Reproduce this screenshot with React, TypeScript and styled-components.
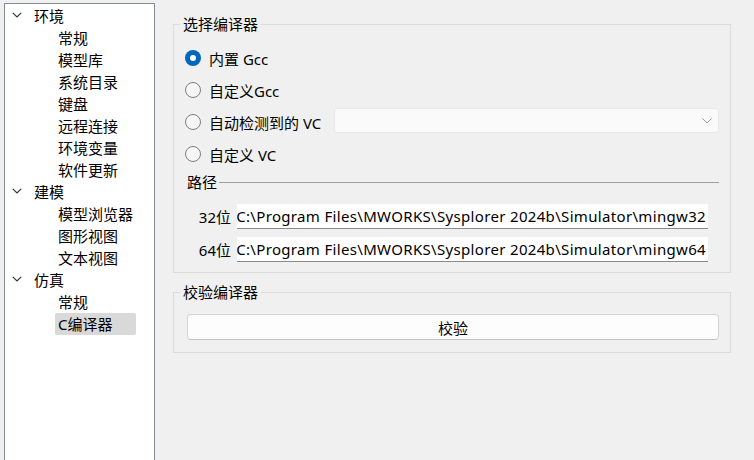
import React from 'react';
import styled, { createGlobalStyle } from 'styled-components';

const Global = createGlobalStyle`
  html, body { margin: 0; padding: 0; background: #f0f0f0; }
  body {
    font-family: "Segoe UI", "Noto Sans", "Noto Sans CJK SC", sans-serif;
    font-size: 15px;
    color: #000;
    overflow: hidden;
  }
`;

const Page = styled.div`
  display: flex;
  align-items: flex-start;
  width: 754px;
  height: 460px;
  overflow: hidden;
`;

const TreePanel = styled.div`
  flex-shrink: 0;
  margin: 3px 0 0 4px;
  width: 151px;
  height: 470px;
  box-sizing: border-box;
  border: 1px solid #878a99;
  background: #fff;
  padding-top: 1px;
`;

const ParentRow = styled.div`
  display: flex;
  align-items: center;
  height: 22px;
  padding-left: 7px;
  line-height: 22px;
  white-space: nowrap;
`;

const Chevron = styled.svg`
  width: 10px;
  height: 6px;
  margin-right: 12px;
  margin-top: -2px;
`;

const ChildRow = styled.div`
  display: flex;
  align-items: center;
  height: 22px;
  padding-left: 50px;
`;

const ChildLabel = styled.span<{ $selected?: boolean }>`
  display: block;
  box-sizing: border-box;
  width: 81px;
  height: 22px;
  line-height: 22px;
  padding: 0 3px;
  border-radius: 2px;
  white-space: nowrap;
  background: ${(p) => (p.$selected ? '#d9d9d9' : 'transparent')};
`;

const Content = styled.div`
  display: flex;
  flex-direction: column;
  margin: 16px 0 0 18px;
  width: 558px;
`;

const Group = styled.fieldset<{ $mt?: number }>`
  margin: ${(p) => p.$mt ?? 0}px 0 0 0;
  padding: 0;
  border: 1px solid #dcdcdc;
  min-inline-size: 0;
  width: 558px;
  box-sizing: border-box;
`;

const Legend = styled.legend`
  margin-left: 6px;
  padding: 0 3px;
  line-height: 16px;
  font-size: 15px;
`;

const GroupBody = styled.div<{ $pad: string }>`
  display: flex;
  flex-direction: column;
  padding: ${(p) => p.$pad};
`;

const RadioRow = styled.div`
  display: flex;
  align-items: center;
  height: 32px;
  white-space: nowrap;
`;

const RadioMark = styled.span<{ $checked?: boolean }>`
  position: relative;
  flex-shrink: 0;
  box-sizing: border-box;
  width: 16px;
  height: 16px;
  border-radius: 50%;
  margin-right: 8px;
  background: ${(p) => (p.$checked ? '#0067c0' : '#f6f6f6')};
  border: ${(p) => (p.$checked ? 'none' : '1px solid #7e7e7e')};
  &::after {
    content: '';
    display: ${(p) => (p.$checked ? 'block' : 'none')};
    position: absolute;
    left: 5px;
    top: 5px;
    width: 6px;
    height: 6px;
    border-radius: 50%;
    background: #fff;
  }
`;

const Combo = styled.div`
  margin-left: auto;
  align-self: flex-start;
  margin-top: 2px;
  width: 385px;
  height: 25px;
  box-sizing: border-box;
  border: 1px solid #e8e8e8;
  border-radius: 3px;
  background: #fafafa;
  display: flex;
  align-items: center;
  justify-content: flex-end;
  padding-right: 6px;
`;

const SubHeader = styled.div`
  display: flex;
  align-items: center;
  height: 24px;
  margin-left: 2px;
`;

const SubTitle = styled.span`
  line-height: 24px;
  margin-right: 2px;
`;

const SubLine = styled.div`
  flex: 1;
  height: 1px;
  background: #a0a0a0;
`;

const PathRow = styled.div<{ $mt: number }>`
  display: flex;
  align-items: center;
  margin-top: ${(p) => p.$mt}px;
  height: 25px;
`;

const PathLabel = styled.span`
  width: 46px;
  text-align: right;
  margin-right: 6px;
  white-space: nowrap;
`;

const PathInput = styled.div`
  width: 471px;
  height: 25px;
  box-sizing: border-box;
  background: #fff;
  border-bottom: 1px solid #8a8a8a;
  display: flex;
  align-items: center;
  justify-content: flex-end;
  overflow: hidden;
  white-space: nowrap;
  padding-right: 2px;
  letter-spacing: 0.33px;
`;

const Button = styled.div`
  height: 26px;
  box-sizing: border-box;
  border: 1px solid #d4d4d4;
  border-bottom-color: #c2c2c2;
  border-radius: 4px;
  background: #fdfdfd;
  display: flex;
  align-items: center;
  justify-content: center;
`;

const tree = [
  { label: '环境', children: ['常规', '模型库', '系统目录', '键盘', '远程连接', '环境变量', '软件更新'] },
  { label: '建模', children: ['模型浏览器', '图形视图', '文本视图'] },
  { label: '仿真', children: ['常规', 'C编译器'] },
];

const radios = [
  { label: '内置 Gcc', checked: true },
  { label: '自定义Gcc' },
  { label: '自动检测到的 VC', combo: true },
  { label: '自定义 VC' },
];

const base = 'C:\\Program Files\\MWORKS\\Sysplorer 2024b\\Simulator\\';

export default function App() {
  return (
    <>
      <Global />
      <Page>
        <TreePanel>
          {tree.map((g) => (
            <React.Fragment key={g.label}>
              <ParentRow>
                <Chevron viewBox="0 0 10 6">
                  <polyline points="0.8,0.8 5,5 9.2,0.8" fill="none" stroke="#333" strokeWidth="1.2" />
                </Chevron>
                {g.label}
              </ParentRow>
              {g.children.map((c) => (
                <ChildRow key={c}>
                  <ChildLabel $selected={c === 'C编译器'}>{c}</ChildLabel>
                </ChildRow>
              ))}
            </React.Fragment>
          ))}
        </TreePanel>
        <Content>
          <Group>
            <Legend>选择编译器</Legend>
            <GroupBody $pad="10px 11px 10px 11px">
              {radios.map((r) => (
                <RadioRow key={r.label}>
                  <RadioMark $checked={r.checked} />
                  {r.label}
                  {r.combo && (
                    <Combo>
                      <svg width="10" height="6" viewBox="0 0 10 6">
                        <polyline points="0.5,0.5 5,5 9.5,0.5" fill="none" stroke="#9a9a9a" strokeWidth="1" />
                      </svg>
                    </Combo>
                  )}
                </RadioRow>
              ))}
              <SubHeader>
                <SubTitle>路径</SubTitle>
                <SubLine />
              </SubHeader>
              <PathRow $mt={10}>
                <PathLabel>32位</PathLabel>
                <PathInput>{base + 'mingw32'}</PathInput>
              </PathRow>
              <PathRow $mt={8}>
                <PathLabel>64位</PathLabel>
                <PathInput>{base + 'mingw64'}</PathInput>
              </PathRow>
            </GroupBody>
          </Group>
          <Group $mt={11}>
            <Legend>校验编译器</Legend>
            <GroupBody $pad="14px 11px 12px 13px">
              <Button>校验</Button>
            </GroupBody>
          </Group>
        </Content>
      </Page>
    </>
  );
}
